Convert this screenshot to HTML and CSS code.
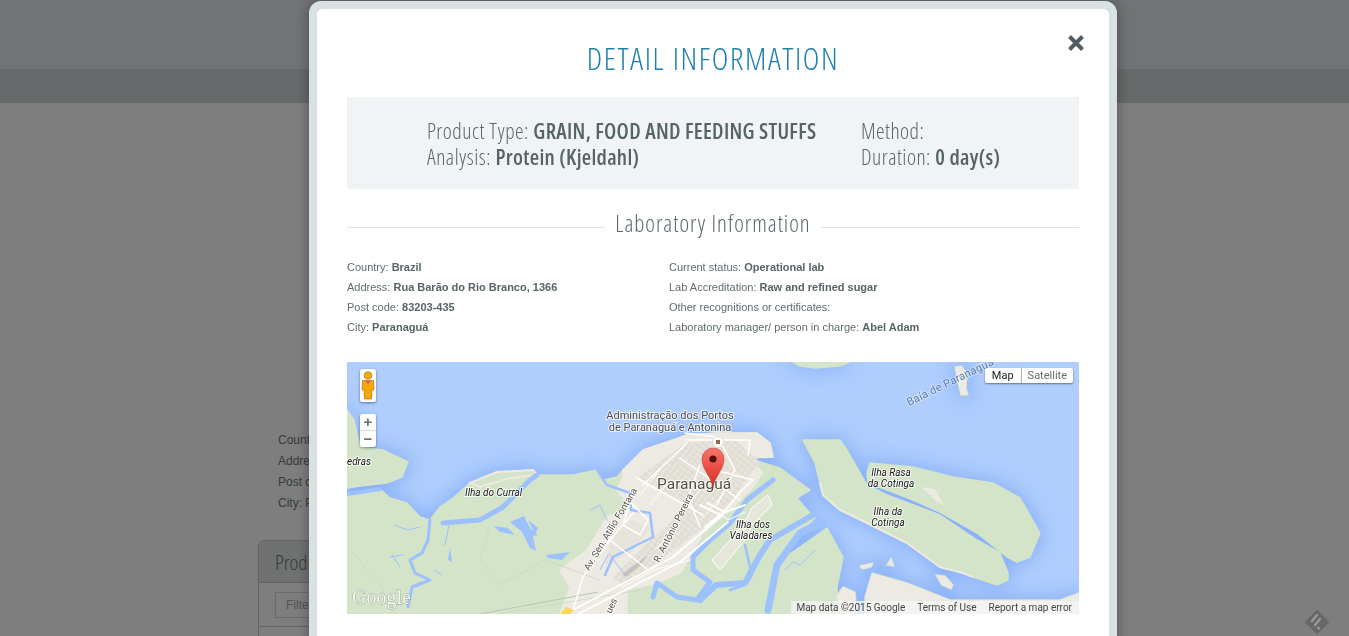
FILE: index.html
```html
<!DOCTYPE html>
<html lang="en">
<head>
<meta charset="utf-8">
<title>Detail Information</title>
<link rel="stylesheet" href="styles.css">
</head>
<body>
<div class="page">
  <header class="top-bar"></header>
  <nav class="sub-bar"></nav>
  <main class="page-main">
    <ul class="lab-lines">
      <li>Country: Brazil</li>
      <li>Address: Rua Barão do Rio Branco, 1366</li>
      <li>Post code: 83203-435</li>
      <li>City: Paranaguá</li>
    </ul>
    <section class="products">
      <h2 class="products-title">Products</h2>
      <div class="products-filter"><span class="filter-input">Filter</span></div>
      <div class="products-row"></div>
    </section>
  </main>
</div>

<div class="overlay">
  <div class="modal">
    <button class="close" aria-label="Close">
      <svg viewBox="0 0 16 16" width="16" height="16"><path d="M1.500 1.500 14.500 14.500M14.500 1.500 1.500 14.500" fill="none" stroke="#4f5c61" stroke-width="4"/></svg>
    </button>
    <h1 class="modal-title">DETAIL INFORMATION</h1>

    <div class="summary">
      <div class="summary-col">
        <p>Product Type: <b>GRAIN, FOOD AND FEEDING STUFFS</b></p>
        <p>Analysis: <b>Protein (Kjeldahl)</b></p>
      </div>
      <div class="summary-col">
        <p>Method:</p>
        <p>Duration: <b>0 day(s)</b></p>
      </div>
    </div>

    <div class="section-head">
      <span class="rule"></span>
      <h2 class="section-title">Laboratory Information</h2>
      <span class="rule"></span>
    </div>

    <div class="facts">
      <ul>
        <li>Country: <b>Brazil</b></li>
        <li>Address: <b>Rua Barão do Rio Branco, 1366</b></li>
        <li>Post code: <b>83203-435</b></li>
        <li>City: <b>Paranaguá</b></li>
      </ul>
      <ul>
        <li>Current status: <b>Operational lab</b></li>
        <li>Lab Accreditation: <b>Raw and refined sugar</b></li>
        <li>Other recognitions or certificates:</li>
        <li>Laboratory manager/ person in charge: <b>Abel Adam</b></li>
      </ul>
    </div>

    <div class="map">
      <svg class="map-art" viewBox="347 362 732 252" width="732" height="252">
        <defs>
          <filter id="coast" x="-10%" y="-10%" width="120%" height="120%"><feGaussianBlur stdDeviation="9"/></filter>
          <pattern id="blocks" width="5" height="5" patternUnits="userSpaceOnUse" patternTransform="rotate(38)">
            <rect width="5" height="5" fill="#e8e5dc"/>
            <path d="M0 1H5M1 0V5" stroke="#dad6cc" stroke-width=".8"/>
          </pattern>
          <linearGradient id="pinfill" x1="0" y1="0" x2="0" y2="1">
            <stop offset="0" stop-color="#f4776d"/>
            <stop offset=".5" stop-color="#ee4c42"/>
            <stop offset="1" stop-color="#c9302a"/>
          </linearGradient>
          <path id="landmass" d="M347 410L354 420 360 447 383 450 408 462 402 477 387 483 360 486 347 488ZM347 494L380 489 390 498 407 503 420 517 430 520 440 507 453 498 470 483 497 472 533 470 537 475 573 475 597 470 603 480 617 477 623 470 643 450 667 442 687 435 717 433 757 433 770 443 773 457 747 458 780 468 810 490 797 498 807 510 815 518 800 533 777 563 827 528 843 557 837 587 837 595 843 587 855 592 857 614 347 614ZM803 440L840 440 847 450 867 485 887 495 940 515 977 540 1000 553 1008 573 1008 580 997 585 973 577 963 573 940 567 907 543 867 523 840 510 823 495 820 483 815 463ZM793 362L850 362 840 366 815 368 800 366ZM870 463L913 467 953 477 993 483 1020 498 1040 533 1030 557 1017 562 1007 557 977 533 940 512 913 500 887 490 868 483 867 473ZM955 367L962 366 967 375 966 388 968 395 961 395 958 382ZM865 614L865 597 872 573 907 583 950 600 1060 600 1079 593 1079 614ZM936 575L945 576 953 585 951 589 942 585ZM860 566L873 563 871 567 862 569ZM887 565L891 558 894 566Z"/>
        </defs>

        <rect x="347" y="362" width="732" height="252" fill="#afcdfd"/>
        <use href="#landmass" fill="#7fa9f7" stroke="#7fa9f7" stroke-width="8" filter="url(#coast)" opacity=".75"/>
        <use href="#landmass" fill="#d3e4c8" stroke="#d3e4c8" stroke-width="1.500" stroke-linejoin="round"/>

        <!-- pale shoreline and built-up land -->
        <path d="M623 477L617 490 630 507 607 517 587 550 560 570 570 587 560 614 627 614 627 590 657 583 680 573 690 557 703 533 727 513 753 487 763 472 747 458 773 457 770 443 757 433 717 433 687 435 667 442 643 450 623 470 Z" fill="#eceae2" stroke="#eceae2" stroke-linejoin="round" stroke-width="1.500"/>
        <path d="M865 614L865 597 872 573 907 583 950 600 1060 600 1079 593 1079 614ZM837 595L843 587 855 592 857 614 840 614Z" fill="#eceae2"/>
        <path d="M936 575L945 576 953 585 951 589 942 585ZM860 566L873 563 871 567 862 569ZM887 565L891 558 894 566ZM955 367L962 366 967 375 966 388 968 395 961 395 958 382ZM921 487L935 489 944 505 937 502 930 495Z" fill="#eceae2"/>
        <path d="M470 483L497 472 533 470 537 475 510 478 480 487ZM820 483L823 495 840 510 867 523 907 543 940 567 963 573 973 577" fill="none" stroke="#eceae2" stroke-width="2"/>

        <!-- town blocks -->
        <path d="M637 478L687 442 735 440 760 462 730 503 703 528 660 560 625 585 612 578 650 540 690 505Z" fill="url(#blocks)"/>
        <path d="M612 535L632 520 650 528 632 552 605 565Z" fill="#e3e0d7" opacity=".7"/>
        <path d="M622 574L648 555 640 566 626 577Z" fill="#c4c3bf"/>

        <!-- main channels -->
        <g fill="none" stroke="#9dc1fc" stroke-linecap="round" stroke-linejoin="round">
          <path d="M443 523L480 520 503 507 530 480 537 475" stroke-width="5"/>
          <path d="M430 520L428 540 422 553 410 560 415 573 430 580 412 587 408 607" stroke-width="3"/>
          <path d="M347 494L380 489" stroke-width="4"/>
          <path d="M597 470L607 485 630 493 631 510 650 513 653 537 633 547 613 557 605 575" stroke-width="2.500"/>
          <path d="M653 597L657 583 677 597 697 600 710 582 693 570 693 557 710 540 730 523 747 500 773 480" stroke-width="5"/>
          <path d="M700 600L716 585 745 583 760 555 770 540 813 515" stroke-width="6"/>
          <path d="M768 610L777 565 800 533 822 522" stroke-width="7"/>
          <path d="M730 590L745 585 752 575 745 545" stroke-width="2.500"/>
          <path d="M785 570L793 562 800 565 810 555 815 550" stroke-width="1"/>
          <path d="M394 525L408 530 420 527 M390 557L403 555 M392 555L400 567 M435 570L442 575 M445 545L450 520" stroke-width="1"/>
          <path d="M590 510L600 505 607 520 M610 555L625 575 M600 570L608 555" stroke-width="1"/>
        </g>

        <!-- ponds -->
        <path d="M494 526L508 528 515 535 500 532ZM510 522L524 516 532 532 536 551 530 548 522 532ZM528 520L538 528 535 534ZM530 528L538 535 528 537ZM546 555L570 552 562 560 548 558ZM450 548L452 562 448 560Z" fill="#9dc1fc"/>

        <!-- faint land contours -->
        <path d="M347 545L380 585 395 614M498 614L640 590M490 525L480 560 500 585 545 560 600 580" fill="none" stroke="#c9d9bf" stroke-width=".8"/>
        <path d="M480 614L598 592" fill="none" stroke="#b9c4b3" stroke-width="1"/>

        <!-- Ilha dos Valadares roads -->
        <path d="M752 508L768 495 772 505 752 525 745 540 720 570 712 560 735 535 747 518Z" fill="#e6e6da" stroke="#fff" stroke-width="1"/>

        <!-- roads -->
        <g fill="none" stroke="#fff" stroke-linecap="round" stroke-linejoin="round" stroke-width="1.500">
          <path d="M643 485L687 443M637 478L703 515M680 458L740 500M687 440L750 440 748 455M685 433L717 437M715 470L753 480 742 490M700 527L688 497 700 465M718 437L735 470 717 505"/>
          <path d="M573 610L673 557 720 517 742 490 M578 614L680 562 728 522" stroke-width="1.700"/>
          <path d="M573 610L583 577 610 540 633 513 M610 540L648 570 M630 502L648 520 640 535 623 525Z"/>
          <path d="M660 470L640 495 M670 480L650 505 M700 490L680 515 M720 498L700 520 M680 525L655 550 M718 512L728 520 745 512 M654 570L690 560 M622 587L654 570" stroke-width="1"/>
          <path d="M707 503L725 512 745 505 M700 505L720 515 705 527" stroke-width="2"/>
        </g>
        <path d="M560 614L566 607 574 610 570 614Z" fill="#fdd757"/>

        <!-- labels -->
        <g class="map-label">
          <text x="670" y="419" text-anchor="middle">Administração dos Portos</text>
          <text x="670" y="431" text-anchor="middle">de Paranaguá e Antonina</text>
          <text class="town" x="657" y="489">Paranaguá</text>
          <text class="isle" x="465" y="496">Ilha do Curral</text>
          <text class="isle" x="347" y="465">edras</text>
          <text class="isle" x="753" y="528" text-anchor="middle">Ilha dos</text>
          <text class="isle" x="751" y="539" text-anchor="middle">Valadares</text>
          <text class="isle" x="891" y="476" text-anchor="middle">Ilha Rasa</text>
          <text class="isle" x="891" y="487" text-anchor="middle">da Cotinga</text>
          <text class="isle" x="888" y="515" text-anchor="middle">Ilha da</text>
          <text class="isle" x="888" y="526" text-anchor="middle">Cotinga</text>
          <text class="road" transform="translate(589 571) rotate(-59)">Av. Sen. Atílio Fontana</text>
          <text class="road" transform="translate(659 563) rotate(-63)">R. Antônio Pereira</text>
          <text class="road" transform="translate(611 614) rotate(-65)">ues</text>
          <text class="bay" transform="translate(909 406) rotate(-26)">Baía de Paranaguá</text>
          <text class="logo" x="352" y="604">Google</text>
        </g>

        <!-- place marker and pin -->
        <circle cx="718" cy="442" r="5.500" fill="#fff" stroke="#c9c7c0" stroke-width=".6"/>
        <rect x="716" y="440" width="4" height="4" fill="#8a6a50"/>
        <path d="M713 488C712 477 702 470 702 459A11 11 0 0 1 724 459C724 470 714 477 713 488Z" fill="url(#pinfill)" stroke="#b8332c" stroke-width=".5"/>
        <circle cx="713" cy="459" r="3.600" fill="#56100c"/>
      </svg>

      <div class="pegman-box">
        <svg viewBox="0 0 16 30" width="16" height="30"><circle cx="8" cy="4.500" r="3.800" fill="#f2a70f" stroke="#b97a00" stroke-width=".7"/><path d="M2.500 9.500H13.500L14 19 12 19 11.500 28H4.500L4 19 2 19Z" fill="#f2a70f" stroke="#b97a00" stroke-width=".7"/><path d="M5 9.500H11L8 13Z" fill="#e2567a"/></svg>
      </div>
      <div class="zoom-box">
        <span class="zoom-btn">+</span>
        <span class="zoom-btn">−</span>
      </div>
      <div class="map-type">
        <span class="type-btn type-on">Map</span>
        <span class="type-btn">Satellite</span>
      </div>
      <div class="attribution">
        <span>Map data ©2015 Google</span>
        <span>Terms of Use</span>
        <span>Report a map error</span>
      </div>
    </div>
  </div>
</div>

<svg class="feedly" viewBox="0 0 26 26" width="26" height="26">
  <path d="M13 1 25 13 14 24H12L1 13Z" fill="#676867" stroke="#676867" stroke-linejoin="round" stroke-width="1"/>
  <path d="M13 6 8 12M16 10 11 16M14 18.500 15 19.500" stroke="#989998" stroke-width="2.400" stroke-linecap="round" fill="none"/>
</svg>
</body>
</html>
```

FILE: styles.css
```css
* { box-sizing: border-box; }
html, body { margin: 0; height: 636px; overflow: hidden; }
body { background: #fafcfa; font-family: "Liberation Sans", Arial, sans-serif; }
ul { list-style: none; margin: 0; padding: 0; }
p, h1, h2 { margin: 0; font-weight: inherit; }

/* page behind the dialog */
.page { height: 636px; overflow: hidden; }
.top-bar { height: 69px; background: #e2e7e8; }
.sub-bar { height: 34px; background: #ced4d4; }
.page-main { padding: 327px 0 0 258px; }
.lab-lines { padding-left: 20px; font-size: 12px; line-height: 21px; color: #70787c; }
.products { margin-top: 26px; width: 800px; border: 1px solid #c6cac9; border-radius: 6px; height: 200px; }
.products-title { height: 42px; padding: 8px 16px; background: #dfe4e2; border-bottom: 1px solid #c6cac9; font: 300 21px/26px "Open Sans", sans-serif; font-stretch: 75%; color: #6a7478; }
.products-filter { height: 44px; padding: 9px 16px; border-bottom: 1px solid #c6cac9; }
.filter-input { display: block; width: 300px; height: 26px; padding: 0 10px; border: 1px solid #d5d8d8; font-size: 12px; line-height: 24px; color: #a8abab; }

/* dialog */
.overlay { position: fixed; inset: 0; background: rgba(0, 0, 0, .5); }
.modal { position: absolute; top: 1px; left: 309px; width: 808px; height: 700px; padding: 0 30px; background: #fff; border: 8px solid #d9e2e3; border-radius: 12px; box-shadow: 0 0 14px rgba(0, 0, 0, .35); background-clip: padding-box; }
.close { position: absolute; top: 25px; left: 750px; width: 18px; height: 18px; padding: 1px; border: 0; background: none; }
.close svg { display: block; }
.modal-title { padding-top: 31px; height: 88px; text-align: center; font: 300 31.500px/36px "Open Sans", sans-serif; font-stretch: 75%; letter-spacing: 1.600px; color: #1f7fae; }

.summary { display: grid; grid-template-columns: 434px 1fr; height: 92px; padding: 21px 0 0 80px; background: #f0f4f5; font: 300 21.500px/26px "Open Sans", sans-serif; font-stretch: 75%; letter-spacing: .5px; color: #5b676b; }
.summary b { font-weight: 600; letter-spacing: .3px; color: #566367; }

.section-head { display: flex; align-items: center; gap: 10px; height: 35px; margin-top: 18px; }
.rule { flex: 1; height: 1px; margin-top: 6px; background: #e2e4e4; }
.section-title { margin-bottom: 4px; font: 300 23px/30px "Open Sans", sans-serif; font-stretch: 75%; letter-spacing: 1px; color: #5b676b; }

.facts { display: grid; grid-template-columns: 322px 1fr; padding-top: 15px; font-size: 11px; line-height: 20px; color: #5f6b70; }
.facts b { font-weight: 700; color: #586468; }

.map { position: relative; width: 732px; height: 252px; margin-top: 25px; overflow: hidden; }
.map-art { display: block; }
.map-label text { font: 400 11px Roboto, sans-serif; fill: #4e4e4e; stroke: #fff; stroke-width: 2px; stroke-opacity: .75; paint-order: stroke; }
.map-label .town { font-size: 15.500px; fill: #574e40; }
.map-label .isle { font-size: 10px; font-style: italic; fill: #161616; }
.map-label .road { font-size: 9.500px; fill: #56534c; }
.map-label .bay { font-size: 11px; letter-spacing: .2px; fill: #5c7bab; stroke-opacity: .4; }
.map-label .logo { font: 400 20px "Liberation Serif", serif; fill: #f5f5f2; stroke: #7f8a78; stroke-width: 1px; stroke-opacity: .6; }

.pegman-box { position: absolute; left: 13px; top: 7px; width: 16px; height: 33px; padding: 2px 0; background: #fff; border-radius: 2px; box-shadow: 0 1px 3px rgba(0, 0, 0, .45); }
.pegman-box svg { display: block; }
.zoom-box { position: absolute; left: 13px; top: 52px; width: 16px; height: 33px; display: flex; flex-direction: column; background: #fff; border-radius: 2px; box-shadow: 0 1px 3px rgba(0, 0, 0, .4); }
.zoom-btn { flex: 1; text-align: center; font: 700 15px/16px "Liberation Sans", sans-serif; color: #6d6d6d; }
.zoom-btn + .zoom-btn { border-top: 1px solid #d9d9d9; }
.map-type { position: absolute; top: 6px; right: 6px; display: flex; font: 11px/15px Roboto, sans-serif; background: #fff; box-shadow: 0 1px 2px rgba(0, 0, 0, .45); border-radius: 2px; }
.type-btn { height: 15px; padding: 0 6px; color: #6a6a6a; }
.type-on { padding: 0 7px; color: #222; border-right: 1px solid #b4b4b4; }
.attribution { position: absolute; right: 0; bottom: 0; display: flex; gap: 12px; height: 13px; padding: 0 7px 0 5px; background: rgba(245, 245, 245, .78); font: 10px/13px Roboto, sans-serif; color: #444; }

.feedly { position: fixed; left: 1304px; top: 609px; }
```
